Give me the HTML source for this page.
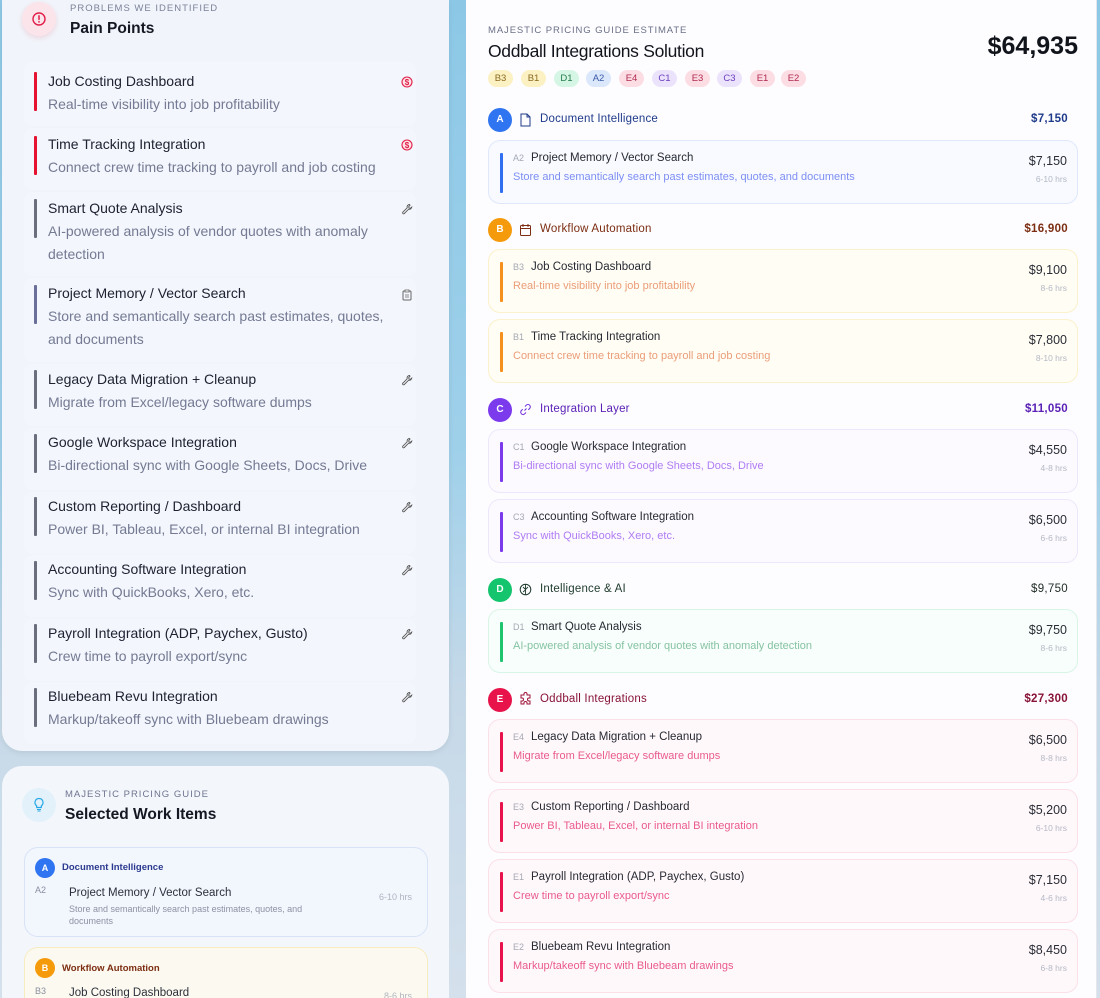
<!DOCTYPE html>
<html style="width:1100px;height:998px;overflow:hidden"><head><meta charset="utf-8">
<style>
*{margin:0;padding:0;box-sizing:border-box}
body{width:1100px;height:998px;overflow:hidden;position:relative;font-family:"Liberation Sans",sans-serif;background:linear-gradient(180deg,#8cc8e6 0%,#9fd0ea 45%,#c6d9e8 70%,#d4e0ec 100%)}
.a{position:absolute;white-space:nowrap}
.lp{position:absolute;left:2px;top:0;width:447px;height:751px;background:#f1f5fb;border-radius:0 0 20px 20px;box-shadow:0 2px 6px rgba(0,0,0,.08)}
.lp2{position:absolute;left:2px;top:766px;width:447px;height:232px;background:#f3f6fb;border-radius:20px 20px 0 0}
.rp{position:absolute;left:466px;top:0;width:631px;height:998px;background:#fdfdff;border-right:1px solid #e4e6ec}
.pi{position:absolute;left:24px;width:392px;background:#f3f6fc;border-radius:8px}
.bar{position:absolute;left:34px;width:3px;border-radius:1px}
.pt{position:absolute;left:48px;font-size:14px;color:#1d2130;line-height:22px;white-space:nowrap}
.pd{position:absolute;left:48px;font-size:14px;color:#747a93;line-height:22.5px;width:345px}
.ic{position:absolute;left:401px}
.chip{position:absolute;top:70px;height:17px;width:25px;border-radius:9px;font-size:9.5px;text-align:center;line-height:17px}
.circ{position:absolute;left:488px;width:24px;height:24px;border-radius:12px;color:#fff;font-size:10px;font-weight:bold;text-align:center;line-height:24px}
.sh{position:absolute;left:540px;font-size:11.5px;letter-spacing:.2px}
.sp{position:absolute;right:32px;font-size:11.5px;font-weight:bold;letter-spacing:.3px}
.card{position:absolute;left:488px;width:590px;height:64px;border-radius:12px;border:1px solid}
.cb{position:absolute;left:11px;top:12px;width:3px;height:40px;border-radius:1px}
.cc{position:absolute;left:24px;top:12px;font-size:9px;color:#a5a8b4}
.ct{position:absolute;left:42px;top:11px;font-size:11.5px;color:#272a33}
.cd{position:absolute;left:24px;top:30px;font-size:11px}
.cp{position:absolute;right:10px;top:13px;font-size:12.5px;color:#2a2d36}
.ch{position:absolute;right:10px;top:33px;font-size:8.5px;color:#b4b8c4}
</style></head><body>
<div class="lp"></div>
<div class="lp2"></div>
<div class="rp"></div>

<div class="a" style="left:22px;top:2px;width:34px;height:34px;border-radius:17px;background:#fbe4ea;box-shadow:0 2px 6px rgba(220,80,110,.2)"></div>
<svg class="a" style="left:31px;top:11px" width="16" height="16" viewBox="0 0 16 16"><circle cx="8" cy="8" r="6" fill="none" stroke="#e11d48" stroke-width="1.4"/><path d="M8 4.8v3.6M8 10.6v.4" stroke="#e11d48" stroke-width="1.5" stroke-linecap="round"/></svg>
<div class="a" style="left:70px;top:3px;font-size:9.5px;letter-spacing:1px;color:#7b8199">PROBLEMS WE IDENTIFIED</div>
<div class="a" style="left:70px;top:20px;font-size:15.5px;font-weight:bold;color:#151822">Pain Points</div>

<div class="pi" style="top:62px;height:64px"></div>
<div class="pi" style="top:128px;height:62px"></div>
<div class="pi" style="top:192px;height:84px"></div>
<div class="pi" style="top:278px;height:84px"></div>
<div class="pi" style="top:364px;height:62px"></div>
<div class="pi" style="top:428px;height:62px"></div>
<div class="pi" style="top:492px;height:62px"></div>
<div class="pi" style="top:555px;height:62px"></div>
<div class="pi" style="top:619px;height:62px"></div>
<div class="pi" style="top:682px;height:62px"></div>

<div class="bar" style="top:72px;height:39px;background:#e5132f"></div>
<div class="pt" style="top:70px">Job Costing Dashboard</div>
<div class="pd" style="top:93px">Real-time visibility into job profitability</div>

<div class="bar" style="top:136px;height:39px;background:#e5132f"></div>
<div class="pt" style="top:133px">Time Tracking Integration</div>
<div class="pd" style="top:156px">Connect crew time tracking to payroll and job costing</div>

<div class="bar" style="top:199px;height:39px;background:#6b6f7d"></div>
<div class="pt" style="top:197px">Smart Quote Analysis</div>
<div class="pd" style="top:220px">AI-powered analysis of vendor quotes with anomaly detection</div>

<div class="bar" style="top:285px;height:39px;background:#6a6f9a"></div>
<div class="pt" style="top:282px">Project Memory / Vector Search</div>
<div class="pd" style="top:305px">Store and semantically search past estimates, quotes, and documents</div>

<div class="bar" style="top:370px;height:39px;background:#6b6f7d"></div>
<div class="pt" style="top:368px">Legacy Data Migration + Cleanup</div>
<div class="pd" style="top:391px">Migrate from Excel/legacy software dumps</div>

<div class="bar" style="top:434px;height:39px;background:#6b6f7d"></div>
<div class="pt" style="top:431px">Google Workspace Integration</div>
<div class="pd" style="top:454px">Bi-directional sync with Google Sheets, Docs, Drive</div>

<div class="bar" style="top:497px;height:39px;background:#6b6f7d"></div>
<div class="pt" style="top:495px">Custom Reporting / Dashboard</div>
<div class="pd" style="top:518px">Power BI, Tableau, Excel, or internal BI integration</div>

<div class="bar" style="top:561px;height:39px;background:#6b6f7d"></div>
<div class="pt" style="top:558px">Accounting Software Integration</div>
<div class="pd" style="top:581px">Sync with QuickBooks, Xero, etc.</div>

<div class="bar" style="top:624px;height:39px;background:#6b6f7d"></div>
<div class="pt" style="top:622px">Payroll Integration (ADP, Paychex, Gusto)</div>
<div class="pd" style="top:645px">Crew time to payroll export/sync</div>

<div class="bar" style="top:688px;height:39px;background:#6b6f7d"></div>
<div class="pt" style="top:685px">Bluebeam Revu Integration</div>
<div class="pd" style="top:708px">Markup/takeoff sync with Bluebeam drawings</div>

<svg class="ic" style="top:76px" width="12" height="12" viewBox="0 0 12 12"><circle cx="6" cy="6" r="5" fill="#fde3e8" stroke="#e11d48" stroke-width="1.1"/><text x="6" y="8.8" font-size="8" text-anchor="middle" fill="#e11d48" font-family="Liberation Sans" font-weight="bold">$</text></svg>
<svg class="ic" style="top:139px" width="12" height="12" viewBox="0 0 12 12"><circle cx="6" cy="6" r="5" fill="#fde3e8" stroke="#e11d48" stroke-width="1.1"/><text x="6" y="8.8" font-size="8" text-anchor="middle" fill="#e11d48" font-family="Liberation Sans" font-weight="bold">$</text></svg>
<svg class="ic" style="top:289px" width="12" height="12" viewBox="0 0 12 12"><rect x="2" y="2" width="8" height="9" rx="1" fill="none" stroke="#666" stroke-width="1"/><rect x="4" y="1" width="4" height="2" fill="#fff" stroke="#666" stroke-width=".8"/><path d="M4 6h4M4 8h4" stroke="#666" stroke-width=".8"/></svg>
<svg style="display:none"><symbol id="w" viewBox="0 0 12 12"><path d="M8.5 1.5a2.5 2.5 0 0 0-2.3 3.3L1.8 9.2a1 1 0 0 0 1.4 1.4l4.4-4.4A2.5 2.5 0 0 0 10.8 4L9.3 5.3 8 5 7.7 3.7 9 2.2a2.5 2.5 0 0 0-.5-.7z" fill="none" stroke="#555" stroke-width=".9"/></symbol></svg>
<svg class="ic" style="top:203px" width="12" height="12"><use href="#w"/></svg>
<svg class="ic" style="top:374px" width="12" height="12"><use href="#w"/></svg>
<svg class="ic" style="top:437px" width="12" height="12"><use href="#w"/></svg>
<svg class="ic" style="top:501px" width="12" height="12"><use href="#w"/></svg>
<svg class="ic" style="top:564px" width="12" height="12"><use href="#w"/></svg>
<svg class="ic" style="top:628px" width="12" height="12"><use href="#w"/></svg>
<svg class="ic" style="top:691px" width="12" height="12"><use href="#w"/></svg>

<div class="a" style="left:22px;top:788px;width:34px;height:34px;border-radius:17px;background:#e3f1fb"></div>
<svg class="a" style="left:33px;top:797px" width="12" height="16" viewBox="0 0 12 16"><path d="M6 1.5a4 4 0 0 0-2.3 7.3V10.5h4.6V8.8A4 4 0 0 0 6 1.5z" fill="none" stroke="#29a8e8" stroke-width="1.2"/><path d="M4 12.5h4M4.5 14h3" stroke="#29a8e8" stroke-width="1.1"/></svg>
<div class="a" style="left:65px;top:789px;font-size:9.5px;letter-spacing:1px;color:#6f7590">MAJESTIC PRICING GUIDE</div>
<div class="a" style="left:65px;top:806px;font-size:15.5px;font-weight:bold;color:#151822">Selected Work Items</div>

<div class="a" style="left:24px;top:847px;width:404px;height:90px;border-radius:14px;border:1px solid #d8e3f7;background:#f2f6fd"></div>
<div class="circ" style="left:35px;top:858px;width:20px;height:20px;line-height:20px;background:#2f74f0;font-size:9px">A</div>
<div class="a" style="left:62px;top:862px;font-size:9.5px;font-weight:bold;color:#2b3a8f">Document Intelligence</div>
<div class="a" style="left:35px;top:885px;font-size:9px;color:#8a8fa0">A2</div>
<div class="a" style="left:69px;top:887px;font-size:11.5px;color:#2d303c">Project Memory / Vector Search</div>
<div class="a" style="left:379px;top:892px;font-size:9px;color:#b0b4c0">6-10 hrs</div>
<div class="a" style="left:69px;top:903px;font-size:9px;color:#8d91a3;white-space:normal;width:268px;line-height:12px">Store and semantically search past estimates, quotes, and documents</div>

<div class="a" style="left:24px;top:947px;width:404px;height:51px;border-radius:14px 14px 0 0;border:1px solid #f7ecc0;border-bottom:none;background:#fcfaf0"></div>
<div class="circ" style="left:35px;top:958px;width:20px;height:20px;line-height:20px;background:#f59a0b;font-size:9px">B</div>
<div class="a" style="left:62px;top:963px;font-size:9.5px;font-weight:bold;color:#7c2d12">Workflow Automation</div>
<div class="a" style="left:35px;top:986px;font-size:9px;color:#8a8fa0">B3</div>
<div class="a" style="left:69px;top:987px;font-size:11.5px;color:#2d303c">Job Costing Dashboard</div>
<div class="a" style="left:384px;top:991px;font-size:9px;color:#b0b4c0">8-6 hrs</div>

<div class="a" style="left:488px;top:25px;font-size:9.5px;letter-spacing:.9px;color:#6b7088">MAJESTIC PRICING GUIDE ESTIMATE</div>
<div class="a" style="left:488px;top:41px;font-size:17.5px;color:#12141c;letter-spacing:-.3px">Oddball Integrations Solution</div>
<div class="a" style="right:22px;top:32px;font-size:25px;font-weight:bold;color:#12141c">$64,935</div>

<div class="chip" style="left:488px;background:#fcf1c2;color:#8a6a20">B3</div>
<div class="chip" style="left:521px;background:#fcf1c2;color:#8a6a20">B1</div>
<div class="chip" style="left:554px;background:#d5f6e4;color:#237a4c">D1</div>
<div class="chip" style="left:586px;background:#dbe7fb;color:#3a5aa8">A2</div>
<div class="chip" style="left:619px;background:#fcdde4;color:#b02a4f">E4</div>
<div class="chip" style="left:652px;background:#ebe3fb;color:#6d3fc0">C1</div>
<div class="chip" style="left:685px;background:#fcdde4;color:#b02a4f">E3</div>
<div class="chip" style="left:717px;background:#ebe3fb;color:#6d3fc0">C3</div>
<div class="chip" style="left:750px;background:#fcdde4;color:#b02a4f">E1</div>
<div class="chip" style="left:781px;background:#fcdde4;color:#b02a4f">E2</div>

<div class="circ" style="top:108px;background:#2f74f0">A</div>
<svg class="a" style="left:519px;top:113px" width="13" height="14" viewBox="0 0 13 14"><path d="M2 1h6l3 3v9H2z" fill="none" stroke="#1e3a8a" stroke-width="1"/><path d="M8 1v3h3" fill="none" stroke="#1e3a8a" stroke-width="1"/></svg>
<div class="sh" style="top:113px;color:#1e3a8a">Document Intelligence</div>
<div class="sp" style="top:113px;color:#1e3a8a">$7,150</div>
<div class="card" style="top:140px;background:#f8faff;border-color:#dfe8fb"><div class="cb" style="background:#2f6ff0"></div><div class="cc">A2</div><div class="ct">Project Memory / Vector Search</div><div class="cd" style="color:#7d8ef3">Store and semantically search past estimates, quotes, and documents</div><div class="cp">$7,150</div><div class="ch">6-10 hrs</div></div>

<div class="circ" style="top:218px;background:#f59a0b">B</div>
<svg class="a" style="left:519px;top:223px" width="13" height="14" viewBox="0 0 13 14"><rect x="1.5" y="2.5" width="10" height="10" rx="1" fill="none" stroke="#7c2d12" stroke-width="1"/><path d="M1.5 5.5h10M4 1v3M9 1v3" stroke="#7c2d12" stroke-width="1"/></svg>
<div class="sh" style="top:223px;color:#7c2d12">Workflow Automation</div>
<div class="sp" style="top:223px;color:#7c2d12">$16,900</div>
<div class="card" style="top:249px;background:#fffdf4;border-color:#fbf1cc"><div class="cb" style="background:#f4901b"></div><div class="cc">B3</div><div class="ct">Job Costing Dashboard</div><div class="cd" style="color:#eb9d78">Real-time visibility into job profitability</div><div class="cp">$9,100</div><div class="ch">8-6 hrs</div></div>
<div class="card" style="top:319px;background:#fffdf4;border-color:#fbf1cc"><div class="cb" style="background:#f4901b"></div><div class="cc">B1</div><div class="ct">Time Tracking Integration</div><div class="cd" style="color:#eb9d78">Connect crew time tracking to payroll and job costing</div><div class="cp">$7,800</div><div class="ch">8-10 hrs</div></div>

<div class="circ" style="top:398px;background:#7c3aed">C</div>
<svg class="a" style="left:519px;top:403px" width="13" height="13" viewBox="0 0 13 13"><path d="M5.5 7.5l2-2M6 3.5l1.3-1.3a2.3 2.3 0 0 1 3.3 3.3L9.3 6.8M7 9.5l-1.3 1.3a2.3 2.3 0 0 1-3.3-3.3L3.7 6.2" fill="none" stroke="#6d28d9" stroke-width="1"/></svg>
<div class="sh" style="top:403px;color:#5b21b6">Integration Layer</div>
<div class="sp" style="top:403px;color:#5b21b6">$11,050</div>
<div class="card" style="top:429px;background:#fcfaff;border-color:#ede7fb"><div class="cb" style="background:#7c3aed"></div><div class="cc">C1</div><div class="ct">Google Workspace Integration</div><div class="cd" style="color:#b07cf3">Bi-directional sync with Google Sheets, Docs, Drive</div><div class="cp">$4,550</div><div class="ch">4-8 hrs</div></div>
<div class="card" style="top:499px;background:#fcfaff;border-color:#ede7fb"><div class="cb" style="background:#7c3aed"></div><div class="cc">C3</div><div class="ct">Accounting Software Integration</div><div class="cd" style="color:#b07cf3">Sync with QuickBooks, Xero, etc.</div><div class="cp">$6,500</div><div class="ch">6-6 hrs</div></div>

<div class="circ" style="top:578px;background:#14c56d">D</div>
<svg class="a" style="left:519px;top:583px" width="13" height="13" viewBox="0 0 13 13"><circle cx="6.5" cy="6.5" r="5.3" fill="none" stroke="#1f3b2d" stroke-width="1"/><path d="M6.5 1.5v10M4 4l2.5 2.5L9 4M4 9l2.5-2" fill="none" stroke="#1f3b2d" stroke-width=".9"/></svg>
<div class="sh" style="top:583px;color:#1f3b2d">Intelligence &amp; AI</div>
<div class="sp" style="top:583px;color:#1f2a24;font-weight:normal">$9,750</div>
<div class="card" style="top:609px;background:#f8fefb;border-color:#d8f5e6"><div class="cb" style="background:#1ec46e"></div><div class="cc">D1</div><div class="ct">Smart Quote Analysis</div><div class="cd" style="color:#86c3a3">AI-powered analysis of vendor quotes with anomaly detection</div><div class="cp">$9,750</div><div class="ch">8-6 hrs</div></div>

<div class="circ" style="top:688px;background:#e8134a">E</div>
<svg class="a" style="left:519px;top:692px" width="14" height="14" viewBox="0 0 14 14"><path d="M5 2a1.5 1.5 0 0 1 3 0v1h3v3h-1a1.5 1.5 0 0 0 0 3h1v3H8v-1a1.5 1.5 0 0 0-3 0v1H2V9h1a1.5 1.5 0 0 0 0-3H2V3h3z" fill="none" stroke="#9f1239" stroke-width="1"/></svg>
<div class="sh" style="top:693px;color:#881337">Oddball Integrations</div>
<div class="sp" style="top:693px;color:#881337">$27,300</div>
<div class="card" style="top:719px;background:#fff8fb;border-color:#fbe0e8"><div class="cb" style="background:#e8134a"></div><div class="cc">E4</div><div class="ct">Legacy Data Migration + Cleanup</div><div class="cd" style="color:#e95a8d">Migrate from Excel/legacy software dumps</div><div class="cp">$6,500</div><div class="ch">8-8 hrs</div></div>
<div class="card" style="top:789px;background:#fff8fb;border-color:#fbe0e8"><div class="cb" style="background:#e8134a"></div><div class="cc">E3</div><div class="ct">Custom Reporting / Dashboard</div><div class="cd" style="color:#e95a8d">Power BI, Tableau, Excel, or internal BI integration</div><div class="cp">$5,200</div><div class="ch">6-10 hrs</div></div>
<div class="card" style="top:859px;background:#fff8fb;border-color:#fbe0e8"><div class="cb" style="background:#e8134a"></div><div class="cc">E1</div><div class="ct">Payroll Integration (ADP, Paychex, Gusto)</div><div class="cd" style="color:#e95a8d">Crew time to payroll export/sync</div><div class="cp">$7,150</div><div class="ch">4-6 hrs</div></div>
<div class="card" style="top:929px;background:#fff8fb;border-color:#fbe0e8"><div class="cb" style="background:#e8134a"></div><div class="cc">E2</div><div class="ct">Bluebeam Revu Integration</div><div class="cd" style="color:#e95a8d">Markup/takeoff sync with Bluebeam drawings</div><div class="cp">$8,450</div><div class="ch">6-8 hrs</div></div>
</body></html>
